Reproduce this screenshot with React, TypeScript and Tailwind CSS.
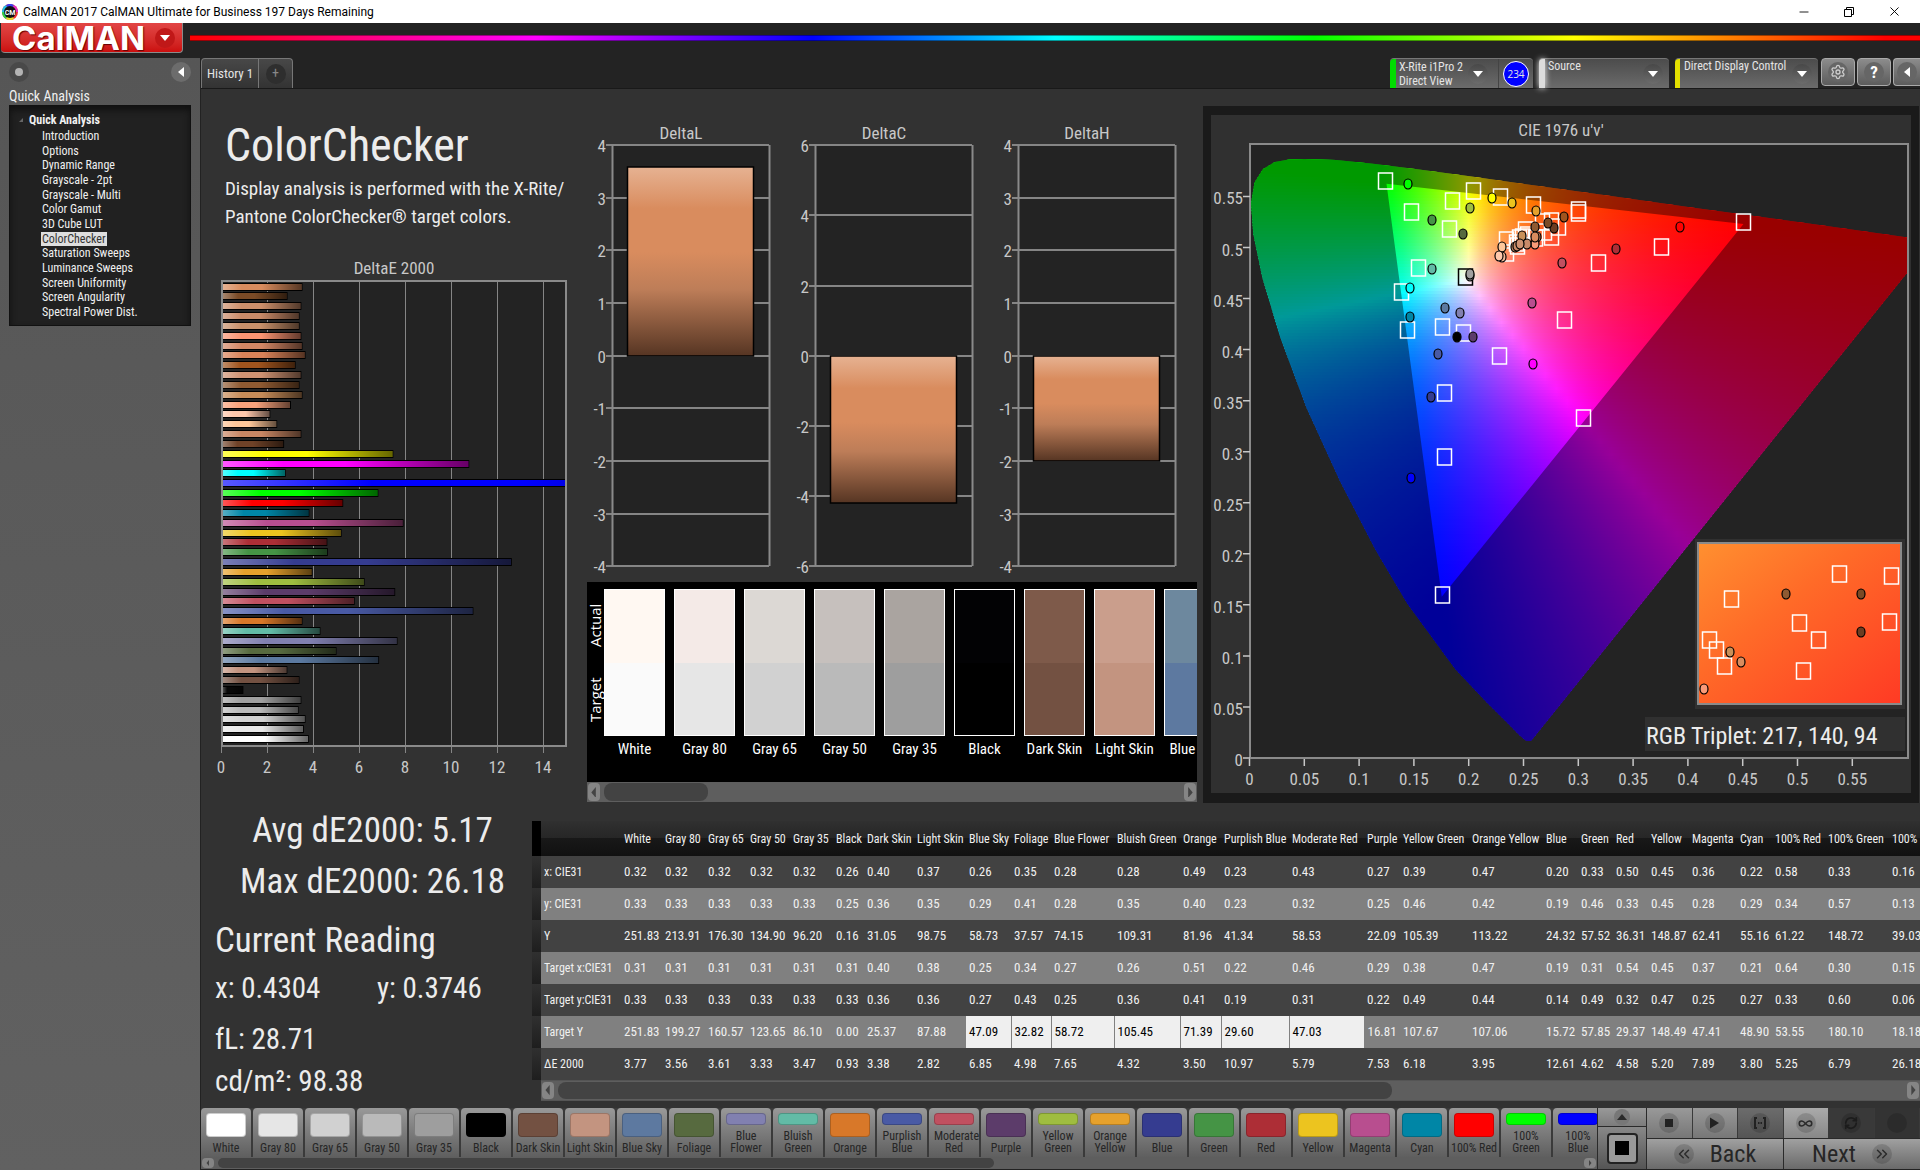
import { useMemo } from 'react';
import type { ReactNode } from 'react';
import { ChevronsLeft, ChevronsRight, Infinity as InfinityIcon, Minus, RefreshCw, Settings, X } from 'lucide-react';

const SKIN = '#d98c5e';

const NAV = [
  'Introduction', 'Options', 'Dynamic Range', 'Grayscale - 2pt', 'Grayscale - Multi', 'Color Gamut', '3D Cube LUT',
  'ColorChecker', 'Saturation Sweeps', 'Luminance Sweeps', 'Screen Uniformity', 'Screen Angularity', 'Spectral Power Dist.',
];

// DeltaE bars, top to bottom
const DELTA_E: [number, string][] = [
  [3.5, SKIN], [2.85, '#7a4a26'], [3.45, '#cc8f6b'], [3.37, '#c98a68'], [3.37, '#c8906a'], [3.45, '#fb9472'],
  [3.5, '#d38664'], [3.63, '#d98258'], [3.2, '#a0541e'], [3.45, '#cf9272'], [3.37, '#8f5a32'], [3.5, '#c68b58'],
  [3.0, '#f9a37c'], [2.1, '#ffc8ac'], [2.4, '#ffc79a'], [3.45, '#c98764'], [2.7, '#6f4228'],
  [7.45, '#ffff00'], [10.75, '#ff00ff'], [2.77, '#00ffff'], [26.18, '#0000ff'], [6.8, '#00ff00'], [5.27, '#ff0000'],
  [3.8, '#0086a6'], [7.89, '#b84e8f'], [5.2, '#ecc41f'], [4.58, '#ad2e36'], [4.6, '#459445'], [12.6, '#353c90'],
  [3.93, '#e6a12c'], [6.2, '#9fbd40'], [7.53, '#5c3c6a'], [5.77, '#c05060'], [10.93, '#495aa5'], [3.5, '#d87829'],
  [4.28, '#62bba6'], [7.63, '#8180b0'], [4.98, '#576a3f'], [6.83, '#5b79a0'], [2.84, '#c39480'], [3.37, '#735142'],
  [0.93, '#080808'], [3.45, '#a0a0a0'], [3.33, '#bababa'], [3.63, '#d2d2d2'], [3.56, '#e8e8e8'], [3.77, '#ffffff'],
];

const DELTAS = [
  { name: 'DeltaL', max: 4, step: 1, value: 3.58 },
  { name: 'DeltaC', max: 6, step: 2, value: -4.2 },
  { name: 'DeltaH', max: 4, step: 1, value: -2 },
];

const SWATCHES = [
  { name: 'White', actual: '#fff8f2', target: '#fafafa' },
  { name: 'Gray 80', actual: '#f4eae7', target: '#e6e6e6' },
  { name: 'Gray 65', actual: '#dcd8d4', target: '#d1d1d1' },
  { name: 'Gray 50', actual: '#c6c0bd', target: '#bababa' },
  { name: 'Gray 35', actual: '#aaa4a0', target: '#9e9e9e' },
  { name: 'Black', actual: '#020204', target: '#000000' },
  { name: 'Dark Skin', actual: '#7e5a4a', target: '#735142' },
  { name: 'Light Skin', actual: '#ca9e8c', target: '#c39480' },
  { name: 'Blue Sky', actual: '#6d889e', target: '#5d79a0' },
];

const COLUMNS: [string, number][] = [
  ['White', 41], ['Gray 80', 43], ['Gray 65', 42], ['Gray 50', 43], ['Gray 35', 43], ['Black', 31], ['Dark Skin', 50],
  ['Light Skin', 52], ['Blue Sky', 45], ['Foliage', 40], ['Blue Flower', 63], ['Bluish Green', 66], ['Orange', 41],
  ['Purplish Blue', 68], ['Moderate Red', 75], ['Purple', 36], ['Yellow Green', 69], ['Orange Yellow', 74], ['Blue', 35],
  ['Green', 35], ['Red', 35], ['Yellow', 41], ['Magenta', 48], ['Cyan', 35], ['100% Red', 53], ['100% Green', 64], ['100% Blue', 60],
];

const ROWS: [string, string][] = [
  ['x: CIE31', '0.32 0.32 0.32 0.32 0.32 0.26 0.40 0.37 0.26 0.35 0.28 0.28 0.49 0.23 0.43 0.27 0.39 0.47 0.20 0.33 0.50 0.45 0.36 0.22 0.58 0.33 0.16'],
  ['y: CIE31', '0.33 0.33 0.33 0.33 0.33 0.25 0.36 0.35 0.29 0.41 0.28 0.35 0.40 0.23 0.32 0.25 0.46 0.42 0.19 0.46 0.33 0.45 0.28 0.29 0.34 0.57 0.13'],
  ['Y', '251.83 213.91 176.30 134.90 96.20 0.16 31.05 98.75 58.73 37.57 74.15 109.31 81.96 41.34 58.53 22.09 105.39 113.22 24.32 57.52 36.31 148.87 62.41 55.16 61.22 148.72 39.03'],
  ['Target x:CIE31', '0.31 0.31 0.31 0.31 0.31 0.31 0.40 0.38 0.25 0.34 0.27 0.26 0.51 0.22 0.46 0.29 0.38 0.47 0.19 0.31 0.54 0.45 0.37 0.21 0.64 0.30 0.15'],
  ['Target y:CIE31', '0.33 0.33 0.33 0.33 0.33 0.33 0.36 0.36 0.27 0.43 0.25 0.36 0.41 0.19 0.31 0.22 0.49 0.44 0.14 0.49 0.32 0.47 0.25 0.27 0.33 0.60 0.06'],
  ['Target Y', '251.83 199.27 160.57 123.65 86.10 0.00 25.37 87.88 47.09 32.82 58.72 105.45 71.39 29.60 47.03 16.81 107.67 107.06 15.72 57.85 29.37 148.49 47.41 48.90 53.55 180.10 18.18'],
  ['ΔE 2000', '3.77 3.56 3.61 3.33 3.47 0.93 3.38 2.82 6.85 4.98 7.65 4.32 3.50 10.97 5.79 7.53 6.18 3.95 12.61 4.62 4.58 5.20 7.89 3.80 5.25 6.79 26.18'],
];

const PATCHES: [string, string][] = [
  ['White', '#ffffff'], ['Gray 80', '#e6e6e6'], ['Gray 65', '#d1d1d1'], ['Gray 50', '#bababa'], ['Gray 35', '#9e9e9e'],
  ['Black', '#000000'], ['Dark Skin', '#735142'], ['Light Skin', '#c39480'], ['Blue Sky', '#5d79a0'], ['Foliage', '#576a3f'],
  ['Blue Flower', '#8180b0'], ['Bluish Green', '#62bba6'], ['Orange', '#d87829'], ['Purplish Blue', '#495aa5'],
  ['Moderate Red', '#c05060'], ['Purple', '#5c3c6a'], ['Yellow Green', '#9fbd40'], ['Orange Yellow', '#e6a12c'],
  ['Blue', '#353c90'], ['Green', '#459445'], ['Red', '#ad2e36'], ['Yellow', '#ecc41f'], ['Magenta', '#b84e8f'],
  ['Cyan', '#0086a6'], ['100% Red', '#ff0000'], ['100% Green', '#00ff00'], ['100% Blue', '#0000ff'],
];

const ONE_LINE = ['Gray 80', 'Gray 65', 'Gray 50', 'Gray 35', 'Dark Skin', 'Light Skin', 'Blue Sky', '100% Red'];

// CIE 1976 spectral locus, u' v'
const LOCUS: [number, number][] = [
  [0.2568, 0.0166], [0.2522, 0.0169], [0.2461, 0.0226], [0.2347, 0.035], [0.2161, 0.0549], [0.1877, 0.0871],
  [0.1441, 0.151], [0.1147, 0.2044], [0.0828, 0.2708], [0.0521, 0.3427], [0.0282, 0.4117], [0.0119, 0.4698],
  [0.0035, 0.5131], [0.0014, 0.5432], [0.0046, 0.5638], [0.0123, 0.577], [0.0231, 0.5837], [0.036, 0.5861],
  [0.0501, 0.5868], [0.0792, 0.5856], [0.1127, 0.5821], [0.1531, 0.5766], [0.2026, 0.5694], [0.2623, 0.5604],
  [0.3315, 0.5501], [0.4035, 0.5393], [0.4692, 0.5296], [0.5203, 0.5219], [0.583, 0.5125], [0.6234, 0.5065],
];

const TARGETS = [
  [174, 66], [262, 76], [289, 82], [241, 86], [200, 97], [238, 114], [322, 90], [367, 95], [367, 98], [532, 107],
  [450, 132], [387, 148], [207, 153], [190, 177], [196, 215], [231, 212], [252, 218], [288, 241], [353, 205],
  [233, 278], [372, 303], [233, 342], [231, 480], [295, 125], [295, 138], [314, 115], [340, 106], [331, 107],
  [347, 112], [340, 122], [324, 123], [333, 117], [305, 128], [308, 123], [311, 122], [316, 120], [306, 131],
];

const READINGS: [number, number, string][] = [
  [197, 69, '#00ff00'], [281, 83, '#ffff00'], [301, 88, '#ecc41f'], [259, 93, '#9fbd40'], [221, 105, '#459445'],
  [252, 119, '#576a3f'], [325, 96, '#e6a12c'], [353, 102, '#a0541e'], [343, 113, '#6b3d22'], [337, 108, '#7a4a26'],
  [324, 112, '#8f5a32'], [326, 122, '#c98a66'], [324, 129, '#f99a78'], [324, 122, SKIN], [311, 121, '#c99058'],
  [316, 129, '#c98a6a'], [304, 132, '#b88060'], [306, 131, '#c98a66'], [309, 129, '#cf9272'], [291, 132, '#ffc79a'],
  [291, 142, '#f0b898'], [288, 141, '#ffc8ac'], [469, 112, '#ff0000'], [405, 134, '#ad2e36'], [351, 148, '#c05060'],
  [221, 154, '#62bba6'], [199, 173, '#00ffff'], [259, 161, '#8a8a8a'], [259, 159, '#a0a0a0'], [321, 188, '#b84e8f'],
  [234, 193, '#5b79a0'], [249, 198, '#8180b0'], [199, 202, '#0086a6'], [246, 222, '#000000'], [262, 222, '#5c3c6a'],
  [227, 239, '#495aa5'], [322, 249, '#ff00ff'], [220, 282, '#353c90'], [200, 363, '#0000ff'],
];

const INSET_TARGETS = [
  [520, 484], [628, 459], [680, 461], [498, 525], [505, 535], [513, 551], [588, 508], [607, 525], [678, 507], [592, 556],
];

const INSET_READINGS: [number, number, string][] = [
  [575, 479, '#8f5a32'], [650, 479, '#7a4a26'], [650, 517, '#6b3d22'], [519, 537, '#c99058'], [530, 547, SKIN], [493, 574, '#f99a78'],
];

const px = (u: number) => 38.5 + u * 1096;
const py = (v: number) => 643 - v * 1021;

// Brightest displayable colour at a chromaticity, out-of-gamut channels clipped
function chromaColor(u: number, v: number) {
  const d = 6 * u - 16 * v + 12;
  const x = (9 * u) / d;
  const y = Math.max((4 * v) / d, 0.001);
  const X = x / y;
  const Z = (1 - x - y) / y;
  const rgb = [
    3.2406 * X - 1.5372 - 0.4986 * Z,
    -0.9689 * X + 1.8758 + 0.0415 * Z,
    0.0557 * X - 0.204 + 1.057 * Z,
  ].map((c) => Math.max(c, 0));
  const m = Math.max(...rgb);
  return `rgb(${rgb.map((c) => Math.round((c / m) * 255)).join(',')})`;
}

function Scrollbar({ thumb, className }: { thumb: string; className: string }) {
  return (
    <div className={`flex items-stretch gap-1 bg-[#5e5e5e] p-px ${className}`}>
      <button aria-label="Scroll left" className="flex w-3 shrink-0 items-center justify-center rounded bg-[#858585]">
        <svg viewBox="0 0 6 12" className="h-3/5 w-2"><path d="M5 0v12L0 6z" fill="#444" /></svg>
      </button>
      <div className="flex-1">
        <div className={`h-full rounded-lg bg-[#434343] ${thumb}`} />
      </div>
      <button aria-label="Scroll right" className="flex w-3 shrink-0 items-center justify-center rounded bg-[#858585]">
        <svg viewBox="0 0 6 12" className="h-3/5 w-2"><path d="M1 0v12l5-6z" fill="#444" /></svg>
      </button>
    </div>
  );
}

function RoundArrow() {
  return (
    <span className="flex size-5 shrink-0 items-center justify-center rounded-full bg-gradient-to-b from-[#484848] to-[#6c6c6c]">
      <svg viewBox="0 0 10 6" className="h-[6px] w-[10px]"><path d="M0 0h10L5 6z" fill="#fff" /></svg>
    </span>
  );
}

function TitleBar() {
  return (
    <div className="flex h-[23px] items-center bg-white pl-[2px] font-['Roboto',sans-serif] text-black">
      <svg viewBox="0 0 16 16" className="size-4">
        <circle cx="8" cy="8" r="8" fill="#e33" />
        <path d="M8 8L0 8A8 8 0 0 1 4 1z" fill="#22c3e6" />
        <path d="M8 8L4 1A8 8 0 0 1 12 1z" fill="#3d3df0" />
        <path d="M8 8L12 1A8 8 0 0 1 16 8z" fill="#e22fc0" />
        <path d="M8 8L0 8A8 8 0 0 0 4 15z" fill="#2fd14a" />
        <path d="M8 8L4 15A8 8 0 0 0 12 15z" fill="#e8dc2c" />
        <circle cx="8" cy="8" r="6" fill="#111" />
        <text x="8" y="11" textAnchor="middle" fontSize="7" fontWeight="700" fill="#fff">CM</text>
      </svg>
      <span className="ml-[5px] flex-1 text-[12px]">CalMAN 2017 CalMAN Ultimate for Business 197 Days Remaining</span>
      <div className="flex gap-8 pr-[18px]">
        <button aria-label="Minimize"><Minus size={14} strokeWidth={1.5} /></button>
        <button aria-label="Restore">
          <svg viewBox="0 0 12 12" className="size-[12px]" fill="none" stroke="#000">
            <path d="M1.500 3.500h7v7h-7zM3.500 3.500v-2h7v7h-2" />
          </svg>
        </button>
        <button aria-label="Close"><X size={15} strokeWidth={1.5} /></button>
      </div>
    </div>
  );
}

function Header() {
  return (
    <header className="flex h-[35px] items-start bg-[#232323]">
      <button className="ml-px flex h-[30px] w-[182px] shrink-0 items-center rounded-b border-b border-r border-[#8b8b8b] bg-gradient-to-b from-[#e24545] to-[#cb0d0d] pl-[11px]">
        <span className="flex-1 text-left font-['Inter',sans-serif] text-[33px] leading-[28px] font-bold text-white [text-shadow:1px_1px_1px_#600]">CalMAN</span>
        <span className="mr-[7px] flex size-5 items-center justify-center rounded-full bg-[#c01818]">
          <svg viewBox="0 0 10 6" className="h-[6px] w-[10px]"><path d="M0 0h10L5 6z" fill="#fff" /></svg>
        </span>
      </button>
      <div className="mt-3 ml-[7px] h-[6px] flex-1 border-y border-[#00000066] bg-[linear-gradient(90deg,#f00,#f0f_20%,#00f_36%,#0ff_50%,#0f0_65%,#ff0_80%,#f00_98%)]" />
    </header>
  );
}

function Sidebar() {
  return (
    <aside className="w-[200px] shrink-0 bg-gradient-to-b from-[#565656] to-[#616161] px-[9px] pt-1 text-[#f0f0f0]">
      <div className="flex items-center justify-between">
        <button aria-label="Status" className="flex size-5 items-center justify-center rounded-full bg-[#494949]">
          <span className="size-2 rounded-full bg-[#b4b4b4]" />
        </button>
        <button aria-label="Collapse panel" className="flex size-5 items-center justify-center rounded-full bg-[#6c6c6c]">
          <svg viewBox="0 0 6 10" className="h-[10px] w-[6px]"><path d="M6 0v10L0 5z" fill="#fff" /></svg>
        </button>
      </div>
      <h2 className="mt-[5px] text-[14px] leading-[18px]">Quick Analysis</h2>
      <nav className="h-[221px] border border-[#111] bg-[#212121] pt-[7px] text-[12px] shadow-[inset_0_4px_6px_#111]">
        <div className="flex items-center gap-[6px] pl-2 leading-[14px]">
          <svg viewBox="0 0 6 6" className="ml-px size-1"><path d="M6 0v6H0z" fill="#666" /></svg>
          <span className="font-bold">Quick Analysis</span>
        </div>
        <ul className="mt-[2px] flex h-[190px] flex-col justify-between pl-[31px]">
          {NAV.map((n) => (
            <li key={n} className="flex">
              <a href="#" className={n === 'ColorChecker' ? 'bg-[#dedede] px-px leading-[14px] text-[#333]' : 'px-px leading-[14px]'}>{n}</a>
            </li>
          ))}
        </ul>
      </nav>
    </aside>
  );
}

function TopTabs() {
  return (
    <div className="flex h-[31px] items-start border-b border-[#191919] bg-[#232323] text-[#e4e4e4]">
      <div className="flex h-[30px] items-stretch rounded-t border-t border-r border-l border-[#777] bg-gradient-to-b from-[#484848] to-[#333]">
        <button className="w-[57px] border-r border-[#777] text-[13px]">History 1</button>
        <button aria-label="Add history" className="flex w-[33px] items-center justify-center">
          <span className="size-5 rounded-full bg-[#2e2e2e] text-[14px] leading-[19px] text-[#888]">+</span>
        </button>
      </div>
      <div className="flex-1" />
      <div className="flex h-[30px] items-stretch gap-[6px] text-[12px] leading-[14px]">
        <div className="flex w-[143px] rounded-t border-t border-[#777] bg-gradient-to-b from-[#4c4c4c] to-[#6b6b6b]">
          <button className="flex flex-1 items-center border-r border-[#444] pr-[10px] text-left">
            <span className="h-full w-[6px] shrink-0 rounded-tl bg-[#00dc00]" />
            <span className="flex-1 pl-[3px] whitespace-nowrap">X-Rite i1Pro 2<br />Direct View</span>
            <RoundArrow />
          </button>
          <div className="flex w-[34px] items-center justify-center">
            <span className="flex size-[26px] items-center justify-center rounded-full border border-white bg-[#0000ff] font-['Open_Sans',sans-serif] text-[10px]">234</span>
          </div>
        </div>
        <button className="flex w-[130px] items-center rounded-t border-t border-[#777] bg-gradient-to-b from-[#4c4c4c] to-[#6b6b6b] pr-[6px] text-left">
          <span className="h-full w-[6px] shrink-0 rounded-tl bg-[#dcdcdc] shadow-[0_0_6px_#fff]" />
          <span className="flex-1 self-start pl-[3px]">Source</span>
          <RoundArrow />
        </button>
        <button className="flex w-[143px] items-center rounded-t border-t border-[#777] bg-gradient-to-b from-[#4c4c4c] to-[#6b6b6b] pr-[6px] text-left">
          <span className="h-full w-[5px] shrink-0 rounded-tl bg-[#e4e000]" />
          <span className="flex-1 self-start pl-1 whitespace-nowrap">Direct Display Control</span>
          <RoundArrow />
        </button>
      </div>
      <div className="ml-[3px] flex h-7 gap-[2px]">
        <button aria-label="Settings" className="flex w-[34px] items-center justify-center rounded border border-[#aaa] bg-gradient-to-b from-[#8c8c8c] to-[#5c5c5c]">
          <span className="flex size-5 items-center justify-center rounded-full bg-[#666]"><Settings size={16} color="#ccc" strokeWidth={2} /></span>
        </button>
        <button aria-label="Help" className="flex w-[34px] items-center justify-center rounded border border-[#aaa] bg-gradient-to-b from-[#8c8c8c] to-[#5c5c5c]">
          <span className="size-5 rounded-full bg-[#666] text-[17px] leading-[20px] font-bold text-white">?</span>
        </button>
        <button aria-label="Collapse" className="flex w-[27px] items-center justify-center rounded-l border-y border-l border-[#aaa] bg-gradient-to-b from-[#8c8c8c] to-[#5c5c5c]">
          <span className="flex size-5 items-center justify-center rounded-full bg-[#666]">
            <svg viewBox="0 0 6 10" className="h-[10px] w-[6px]"><path d="M6 0v10L0 5z" fill="#fff" /></svg>
          </span>
        </button>
      </div>
    </div>
  );
}

function DeltaEChart() {
  const x = (v: number) => Math.round(20 + v * 23);
  return (
    <svg viewBox="0 0 386 526" className="h-[526px] w-[386px]" fontSize="17" fill="#c8c8c8">
      <defs>
        <linearGradient id="gloss">
          <stop offset="0" stopColor="#fff" stopOpacity="0.35" />
          <stop offset="0.25" stopColor="#fff" stopOpacity="0" />
          <stop offset="0.5" stopColor="#000" stopOpacity="0" />
          <stop offset="1" stopColor="#000" stopOpacity="0.6" />
        </linearGradient>
        <clipPath id="de-clip"><rect x="21" y="26" width="344" height="465" /></clipPath>
      </defs>
      <text x="193" y="19" textAnchor="middle">DeltaE 2000</text>
      <rect x="21" y="26" width="344" height="465" fill="#232323" />
      {[0, 2, 4, 6, 8, 10, 12, 14].map((t) => (
        <g key={t}>
          <path d={`M${x(t) + 0.5} 26V498`} stroke="#858585" />
          <text x={x(t)} y="518" textAnchor="middle">{t}</text>
        </g>
      ))}
      <g clipPath="url(#de-clip)">
        {DELTA_E.map(([v, c], i) => {
          const y = Math.round(27.500 + i * 9.84);
          return (
            <g key={i}>
              <rect x="20" y={y} width={v * 23 + 1} height="8" fill="#000" />
              <rect x="21" y={y + 1} width={v * 23 - 1} height="6" fill={c} />
              <rect x="21" y={y + 1} width={v * 23 - 1} height="6" fill="url(#gloss)" />
            </g>
          );
        })}
      </g>
      <rect x="21" y="26" width="344" height="465" fill="none" stroke="#8a8a8a" strokeWidth="2" />
    </svg>
  );
}

function DeltaChart({ name, max, step, value }: { name: string; max: number; step: number; value: number }) {
  const y = (v: number) => Math.round(240.7 - (v / max) * 210.5);
  const ticks = [];
  for (let t = max; t >= -max; t -= step) ticks.push(t);
  const top = value > 0 ? y(value) : y(0);
  const height = Math.abs(y(value) - y(0));
  return (
    <svg viewBox="0 0 203 464" className="h-[464px] w-[203px]" fontSize="17" fill="#c8c8c8">
      <defs>
        <linearGradient id={name} x1="0" y1="0" x2="0" y2="1">
          <stop offset="0" stopColor="#e6b292" />
          <stop offset="0.22" stopColor="#d98c5e" />
          <stop offset="0.45" stopColor="#d98c5e" />
          <stop offset="0.65" stopColor="#bd7d58" />
          <stop offset="1" stopColor="#563523" />
        </linearGradient>
      </defs>
      <text x="94" y="24" textAnchor="middle">{name}</text>
      <rect x="25" y="30" width="157" height="421" fill="#232323" />
      {ticks.map((t) => (
        <g key={t}>
          <path d={`M19 ${y(t)}H182`} stroke="#858585" strokeWidth="2" />
          <text x="19" y={y(t) + 7} textAnchor="end">{t}</text>
        </g>
      ))}
      <path d="M25.500 30V451M182.500 30V451" stroke="#8a8a8a" strokeWidth="2" />
      <rect x="40.500" y={top} width="126" height={height} fill={`url(#${name})`} stroke="#000" strokeWidth="1.500" />
    </svg>
  );
}

function SwatchStrip() {
  return (
    <div className="w-[610px] bg-black text-white">
      <div className="flex h-[200px] items-start overflow-hidden pt-[7px]">
        <div className="flex h-[147px] w-[17px] shrink-0 rotate-180 font-['Open_Sans',sans-serif] text-[15px] leading-[17px]">
          <span className="flex h-full [writing-mode:vertical-rl]">
            <span className="h-1/2 text-center">Target</span>
            <span className="h-1/2 text-center">Actual</span>
          </span>
        </div>
        <div className="flex gap-[9px]">
          {SWATCHES.map((s) => (
            <div key={s.name} className="w-[61px] shrink-0 text-center text-[15px] leading-[26px] whitespace-nowrap">
              <div className="flex h-[147px] flex-col border border-white">
                <div className="flex-1" style={{ background: s.actual }} />
                <div className="flex-1" style={{ background: s.target }} />
              </div>
              {s.name}
            </div>
          ))}
        </div>
      </div>
      <Scrollbar className="h-5" thumb="w-[104px]" />
    </div>
  );
}

function Target({ x, y, stroke = '#fff' }: { x: number; y: number; stroke?: string }) {
  return <rect x={x - 6.5} y={y - 8} width="14" height="16" fill="none" stroke={stroke} strokeWidth="1.500" />;
}

function Reading({ x, y, fill }: { x: number; y: number; fill: string }) {
  return <ellipse cx={x} cy={y} rx="4" ry="5" fill={fill} stroke="#000" strokeWidth="1.200" />;
}

function CieChart() {
  const rows = useMemo(() => {
    const out: { y: number; stops: string[] }[] = [];
    for (let y = 29; y < 643; y += 3) {
      const v = (643 - y - 1.5) / 1021;
      const stops = [];
      for (let i = 0; i <= 60; i++) stops.push(chromaColor(i / 100, v));
      out.push({ y, stops });
    }
    return out;
  }, []);
  const locus = `M${LOCUS.map(([u, v]) => `${px(u).toFixed(1)} ${py(v).toFixed(1)}`).join('L')}Z`;
  const gamut = `M${px(0.4507)} ${py(0.5229)}L${px(0.125)} ${py(0.5625)}L${px(0.1754)} ${py(0.1579)}Z`;
  const steps = [0, 0.05, 0.1, 0.15, 0.2, 0.25, 0.3, 0.35, 0.4, 0.45, 0.5, 0.55];
  return (
    <svg viewBox="0 0 700 678" className="block w-full" fontSize="17" fill="#c8c8c8">
      <defs>
        <clipPath id="plot"><rect x="39" y="29" width="658" height="614" /></clipPath>
        <clipPath id="locus"><path d={locus} /></clipPath>
        {rows.map((r) => (
          <linearGradient key={r.y} id={`row${r.y}`} gradientUnits="userSpaceOnUse" x1="38.500" x2="696.100" y1="0" y2="0">
            {r.stops.map((c, i) => <stop key={i} offset={i / 60} stopColor={c} />)}
          </linearGradient>
        ))}
        <linearGradient id="inset" x1="0" y1="0" x2="1" y2="1">
          <stop offset="0" stopColor="#ff9030" />
          <stop offset="0.4" stopColor="#ff6b28" />
          <stop offset="1" stopColor="#ff3a24" />
        </linearGradient>
      </defs>
      <text x="350" y="21" textAnchor="middle">CIE 1976 u'v'</text>
      <rect x="39" y="29" width="658" height="614" fill="#232323" />
      <g clipPath="url(#plot)">
        <g clipPath="url(#locus)">
          {rows.map((r) => <rect key={r.y} x="39" y={r.y} width="658" height="4" fill={`url(#row${r.y})`} />)}
          <path d={`M0 0H701V678H0Z${gamut}`} fillRule="evenodd" fill="#000" fillOpacity="0.4" />
        </g>
      </g>
      <rect x="39" y="29" width="658" height="614" fill="none" stroke="#8a8a8a" strokeWidth="2" />
      {steps.map((s) => (
        <g key={s}>
          <path d={`M${px(s)} 644v7M39 ${py(s)}h-7`} stroke="#c8c8c8" strokeWidth="1.500" />
          <text x={px(s)} y="670" textAnchor="middle">{s}</text>
          <text x="32" y={py(s) + 8} textAnchor="end">{s}</text>
        </g>
      ))}
      {TARGETS.map(([x, y], i) => <Target key={i} x={x} y={y} />)}
      <Target x={254} y={162} stroke="#000" />
      {READINGS.map(([x, y, c], i) => <Reading key={i} x={x} y={y} fill={c} />)}

      {/* Magnified area round the current reading */}
      <rect x="484" y="424" width="210" height="170" fill="#303030" />
      <rect x="487" y="428" width="203" height="161" fill="url(#inset)" stroke="#8a8a8a" strokeWidth="2" />
      {INSET_TARGETS.map(([x, y], i) => <Target key={i} x={x} y={y} />)}
      {INSET_READINGS.map(([x, y, c], i) => <Reading key={i} x={x} y={y} fill={c} />)}
      <rect x="434" y="602" width="260" height="34" fill="#303030" />
      <text x="435" y="629" fontSize="24" fill="#ececec">RGB Triplet: 217, 140, 94</text>
    </svg>
  );
}

function Stats() {
  return (
    <section className="w-[331px] shrink-0 pl-[14px] text-[#ececec]">
      <div className="w-[315px] text-center text-[35px] leading-[51px]">
        <p>Avg dE2000: 5.17</p>
        <p>Max dE2000: 26.18</p>
      </div>
      <h2 className="mt-2 text-[35px] leading-[51px]">Current Reading</h2>
      <div className="flex text-[29px] leading-[44px]">
        <p className="w-[162px]">x: 0.4304</p>
        <p>y: 0.3746</p>
      </div>
      <p className="mt-2 text-[29px] leading-[42px]">fL: 28.71</p>
      <p className="text-[29px] leading-[42px]">cd/m²: 98.38</p>
    </section>
  );
}

function DataTable() {
  return (
    <section className="mt-4 min-w-0 flex-1">
      <div className="overflow-hidden">
        <table className="w-[1417px] table-fixed border-collapse text-left text-[13px] whitespace-nowrap text-[#f0f0f0]">
          <colgroup>
            <col className="w-[9px]" />
            <col className="w-[80px]" />
            {COLUMNS.map(([name, w]) => <col key={name} style={{ width: w }} />)}
          </colgroup>
          <thead>
            <tr className="h-[35px] bg-[linear-gradient(#303030,#262626_50%,#181818_50%,#111)] text-[12px]">
              <th className="bg-black p-0" />
              <th className="p-0" />
              {COLUMNS.map(([name]) => <th key={name} className="p-0 pl-[3px] font-normal">{name}</th>)}
            </tr>
          </thead>
          <tbody>
            {ROWS.map(([label, values]) => (
              <tr key={label} className="h-8 bg-[#424242] even:bg-[#808080]">
                <td className="bg-gradient-to-b from-[#303030] to-[#1e1e1e] p-0" />
                <th className="p-0 pl-[3px] text-[12px] font-normal">{label}</th>
                {values.split(' ').map((v, i) => (
                  <td
                    key={i}
                    className={label === 'Target Y' && i > 7 && i < 15 ? 'border-r border-[#808080] bg-[#efefef] p-0 pl-[3px] text-black' : 'p-0 pl-[3px]'}
                  >
                    {v}
                  </td>
                ))}
              </tr>
            ))}
          </tbody>
        </table>
      </div>
      <Scrollbar className="ml-[9px] h-[21px] border-y border-[#555]" thumb="w-[62%]" />
    </section>
  );
}

function Round({ children }: { children?: ReactNode }) {
  return <span className="flex size-5 items-center justify-center rounded-full bg-black/15 text-[#2b2b2b]">{children}</span>;
}

function PatchBar() {
  const cell = 'flex flex-1 items-center justify-center border-r border-[#3a3a3a]';
  return (
    <footer className="flex h-[62px] border-b border-[#222] bg-[#2a2a2a] text-[#262626]">
      <div className="flex min-w-0 flex-1 flex-col bg-[#3a3a3a]">
        <div className="flex h-[49px] gap-[2px] overflow-hidden">
          {PATCHES.map(([name, color]) => {
            const twoLines = name.includes(' ') && !ONE_LINE.includes(name);
            return (
              <button key={name} className="flex w-[50px] shrink-0 flex-col items-center rounded-t bg-gradient-to-b from-[#999] to-[#5f5f5f] pt-[5px] text-[12px] leading-[12px]">
                <span className={twoLines ? 'h-3 w-10 shrink-0 rounded border border-black/20' : 'h-6 w-10 shrink-0 rounded border border-black/20'} style={{ background: color }} />
                <span className={twoLines ? 'mt-[5px] w-10 text-center' : 'mt-[5px] whitespace-nowrap'}>{name}</span>
              </button>
            );
          })}
        </div>
        <Scrollbar className="h-3" thumb="w-[57%]" />
      </div>
      <div className="ml-px flex w-[48px] flex-col gap-px">
        <button aria-label="Expand" className="flex h-[18px] items-center justify-center bg-gradient-to-b from-[#999] to-[#7c7c7c]">
          <span className="flex size-4 items-center justify-center rounded-full bg-[#777]">
            <svg viewBox="0 0 10 6" className="h-[6px] w-[10px]"><path d="M0 6h10L5 0z" fill="#2b2b2b" /></svg>
          </span>
        </button>
        <button aria-label="Pattern window" className="flex flex-1 items-center justify-center bg-gradient-to-b from-[#888] to-[#555]">
          <span className="flex size-[31px] items-center justify-center rounded border-2 border-[#222] bg-[#999]">
            <span className="size-[14px] bg-black" />
          </span>
        </button>
      </div>
      <div className="ml-px flex w-[273px] flex-col gap-px">
        <div className="flex h-[30px]">
          <button aria-label="Stop" className={`${cell} bg-gradient-to-b from-[#999] to-[#777]`}><Round><span className="size-2 bg-[#222]" /></Round></button>
          <button aria-label="Play" className={`${cell} bg-gradient-to-b from-[#999] to-[#777]`}>
            <Round><svg viewBox="0 0 10 12" className="h-3 w-[9px]"><path d="M0 0l10 6-10 6z" fill="#222" /></svg></Round>
          </button>
          <button aria-label="Read series" className={`${cell} bg-gradient-to-b from-[#6c6c6c] to-[#555]`}>
            <Round>
              <svg viewBox="0 0 14 12" className="h-3 w-[14px]" fill="none" stroke="#222" strokeWidth="2"><path d="M4 1H2v10h2M10 1h2v10h-2M5 6h1.500M7.500 6H9" /></svg>
            </Round>
          </button>
          <button aria-label="Continuous" className={`${cell} bg-gradient-to-b from-[#aaa] to-[#888]`}><Round><InfinityIcon size={15} strokeWidth={2.5} /></Round></button>
          <button aria-label="Refresh" className={`${cell} bg-[#393939]`}><Round><RefreshCw size={14} strokeWidth={3} color="#1c1c1c" /></Round></button>
          <button aria-label="Record" className={`${cell} bg-[#333]`}><Round /></button>
        </div>
        <div className="flex flex-1 gap-px text-[24px] leading-[30px]">
          <button className="flex flex-1 items-center justify-center gap-4 bg-gradient-to-b from-[#a0a0a0] to-[#6a6a6a]"><Round><ChevronsLeft size={18} /></Round>Back</button>
          <button className="flex flex-1 items-center justify-center gap-4 bg-gradient-to-b from-[#a0a0a0] to-[#6a6a6a]">Next<Round><ChevronsRight size={18} /></Round></button>
        </div>
      </div>
    </footer>
  );
}

export default function App() {
  return (
    <div className="flex min-h-screen flex-col overflow-hidden bg-[#323232] font-['Roboto_Condensed','Carlito',sans-serif]">
      <TitleBar />
      <Header />
      <div className="flex flex-1">
        <Sidebar />
        <main className="flex min-w-0 flex-1 flex-col border-l border-[#222]">
          <TopTabs />
          <div className="flex flex-1 flex-col">
            <div className="flex items-start">
              <section className="w-[386px] shrink-0 pt-[32px] text-[#ececec]">
                <h1 className="pl-6 text-[46px] leading-[48px]">ColorChecker</h1>
                <p className="mt-[6px] mb-6 pl-6 text-[19px] leading-[28px] whitespace-nowrap">
                  Display analysis is performed with the X-Rite/<br />
                  Pantone ColorChecker® target colors.
                </p>
                <DeltaEChart />
              </section>
              <section className="w-[610px] shrink-0 pt-[26px]">
                <div className="mb-[3px] flex">
                  {DELTAS.map((d) => <DeltaChart key={d.name} {...d} />)}
                </div>
                <SwatchStrip />
              </section>
              <section className="mt-[17px] mr-px ml-[6px] min-w-0 flex-1 border-x-8 border-t-9 border-b-10 border-[#1a1a1a] bg-[#303030]">
                <CieChart />
              </section>
            </div>
            <div className="mt-[2px] flex pb-[6px]">
              <Stats />
              <DataTable />
            </div>
          </div>
          <PatchBar />
        </main>
      </div>
    </div>
  );
}
